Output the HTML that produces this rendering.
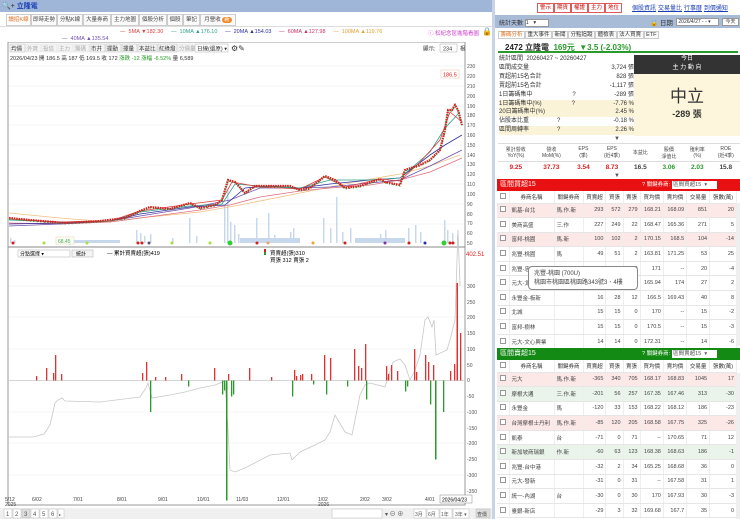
<!DOCTYPE html>
<html><head><meta charset="utf-8">
<style>
*{margin:0;padding:0;box-sizing:border-box}
body{width:740px;height:519px;overflow:hidden;background:#fff;font-family:"Liberation Sans","Noto Sans CJK TC",sans-serif;font-size:7px;color:#333;position:relative}
.a{position:absolute;white-space:nowrap}
.tab{position:absolute;top:14px;height:12px;border:1px solid #ccc;background:#fafafa;font-size:5.5px;line-height:10px;text-align:center;overflow:hidden;color:#444}
.btnr{position:absolute;top:3px;height:10px;border:1px solid #e05a5a;color:#c00;font-size:5.5px;line-height:8px;padding:0 2px;background:#fff}
.lnk{color:#1a3fb5;text-decoration:underline;font-size:6px}
table{border-collapse:collapse}
.bt td{height:14.6px;border-bottom:1px solid #e6e6e6;border-right:1px solid #eee;font-size:5.5px;text-align:right;padding:0 2px;color:#444}
.bt td:nth-child(1){text-align:center;width:12px}
.bt td:nth-child(2){text-align:left;width:45px}
.bt td:nth-child(3){text-align:left;width:29px}
.bt tr.h td{height:12px;text-align:center;background:#fff;color:#333}
.cb{display:inline-block;width:6px;height:6px;border:1px solid #999;background:#fff}
.pink td{background:#fde8e8}
.grn td{background:#eaf4ea}
.r{color:#e02020}.g{color:#2a9a2a}
.rt span.t{border:1px solid #ccc;padding:0 1.5px;background:#fafafa}
</style></head><body>

<div class="a" style="left:0;top:0;width:492px;height:12px;background:#9fb6d8"></div>
<div class="a" style="left:2px;top:1px;font-size:7px;color:#222">🔍+ <span style="color:#1a3fb5;font-weight:bold">立隆電</span></div>
<div class="tab" style="left:6px;width:25px;color:#e07020;background:#fff">讀招K線</div>
<div class="tab" style="left:31px;width:26px">即時走勢</div>
<div class="tab" style="left:57px;width:26px">分點K線</div>
<div class="tab" style="left:83px;width:28px">大量券商</div>
<div class="tab" style="left:111px;width:28px">主力地圖</div>
<div class="tab" style="left:139px;width:28px">個股分析</div>
<div class="tab" style="left:167px;width:16px">個股</div>
<div class="tab" style="left:183px;width:17px">筆記</div>
<div class="tab" style="left:200px;width:36px">月營收 <span style="background:#f08a30;color:#fff;border-radius:4px;padding:0 2px">新</span></div>
<div class="a" style="left:0;top:26px;width:492px;height:1px;background:#ddd"></div>

<div class="a" style="top:29px;left:120px;font-size:5.5px">
<span style="color:#e04040">— &nbsp;5MA ▼182.30</span>&nbsp;&nbsp;&nbsp;&nbsp;
<span style="color:#2aa08a">— &nbsp;10MA ▲176.10</span>&nbsp;&nbsp;&nbsp;&nbsp;
<span style="color:#3030a0">— &nbsp;20MA ▲154.03</span>&nbsp;&nbsp;&nbsp;&nbsp;
<span style="color:#d03060">— &nbsp;60MA ▲127.98</span>&nbsp;&nbsp;&nbsp;&nbsp;
<span style="color:#e0a030">— &nbsp;100MA ▲119.76</span></div>
<div class="a" style="top:29px;left:428px;font-size:5.5px;color:#d040d0">ⓘ 松紀念區進階看圖</div>
<div class="a" style="top:27px;left:482px;font-size:8px">🔒</div>
<div class="a" style="top:36px;left:62px;font-size:5.5px;color:#7050b0">— &nbsp;40MA ▲135.54</div>

<svg class="a" style="left:0;top:42px" width="492" height="477" viewBox="0 42 492 477">
<rect x="8" y="42" width="457" height="463" fill="#fff" stroke="#999"/>
<g font-size="5.5" fill="#333">
<rect x="10" y="44" width="15" height="8" fill="#f4f4f4" stroke="#bbb" stroke-width=".5"/><text x="11" y="50.5">均價</text>
<rect x="26" y="44" width="15" height="8" fill="#f4f4f4" stroke="#ddd" stroke-width=".5"/><text x="27" y="50.5" fill="#aaa">外資</text>
<rect x="42" y="44" width="15" height="8" fill="#f4f4f4" stroke="#ddd" stroke-width=".5"/><text x="43" y="50.5" fill="#aaa">投信</text>
<rect x="58" y="44" width="15" height="8" fill="#f4f4f4" stroke="#ddd" stroke-width=".5"/><text x="59" y="50.5" fill="#aaa">主力</text>
<rect x="74" y="44" width="15" height="8" fill="#f4f4f4" stroke="#ddd" stroke-width=".5"/><text x="75" y="50.5" fill="#aaa">籌碼</text>
<rect x="90" y="44" width="15" height="8" fill="#f4f4f4" stroke="#bbb" stroke-width=".5"/><text x="91" y="50.5">市井</text>
<rect x="106" y="44" width="15" height="8" fill="#f4f4f4" stroke="#bbb" stroke-width=".5"/><text x="107" y="50.5">擺動</text>
<rect x="122" y="44" width="15" height="8" fill="#f4f4f4" stroke="#bbb" stroke-width=".5"/><text x="123" y="50.5">擇量</text>
<rect x="138" y="44" width="19" height="8" fill="#f4f4f4" stroke="#bbb" stroke-width=".5"/><text x="139" y="50.5">本益比</text>
<rect x="158" y="44" width="19" height="8" fill="#f4f4f4" stroke="#bbb" stroke-width=".5"/><text x="159" y="50.5">紅綠燈</text>
<rect x="178" y="44" width="15" height="8" fill="#f4f4f4" stroke="#ddd" stroke-width=".5"/><text x="179" y="50.5" fill="#aaa">分價量</text>
<rect x="195" y="44" width="33" height="8" fill="#fff" stroke="#aaa" stroke-width=".5"/><text x="197" y="50.5">日線(還原)  ▾</text>
<text x="231" y="51" font-size="8">⚙✎</text>
<text x="423" y="50.5">顯示:</text><rect x="440" y="44" width="17" height="8" fill="#fff" stroke="#aaa" stroke-width=".5"/><text x="443" y="50.5">234</text><text x="460" y="50.5">根</text>
<text x="10" y="60">2026/04/23 開 186.5 高 187 低 169.5 收 172 <tspan fill="#2a9a2a">漲跌 -12 漲幅 -6.52%</tspan> 量 6,589</text>
</g>
<g stroke="#f0f0f0" stroke-width=".7">
<line x1="9" y1="66" x2="464" y2="66"/><line x1="9" y1="86" x2="464" y2="86"/><line x1="9" y1="106" x2="464" y2="106"/><line x1="9" y1="125" x2="464" y2="125"/><line x1="9" y1="145" x2="464" y2="145"/><line x1="9" y1="165" x2="464" y2="165"/><line x1="9" y1="184" x2="464" y2="184"/><line x1="9" y1="204" x2="464" y2="204"/><line x1="9" y1="224" x2="464" y2="224"/>
<line x1="9" y1="286" x2="464" y2="286"/><line x1="9" y1="317" x2="464" y2="317"/><line x1="9" y1="349" x2="464" y2="349"/><line x1="9" y1="412" x2="464" y2="412"/><line x1="9" y1="443" x2="464" y2="443"/><line x1="9" y1="475" x2="464" y2="475"/>
</g>
<g font-size="5" fill="#555">
<text x="467" y="68">230</text><text x="467" y="78">220</text><text x="467" y="88">210</text><text x="467" y="98">200</text><text x="467" y="108">190</text><text x="467" y="117">180</text><text x="467" y="127">170</text><text x="467" y="137">160</text><text x="467" y="147">150</text><text x="467" y="157">140</text><text x="467" y="166">130</text><text x="467" y="176">120</text><text x="467" y="186">110</text><text x="467" y="196">100</text><text x="467" y="206">90</text><text x="467" y="216">80</text><text x="467" y="225">70</text><text x="467" y="235">60</text><text x="467" y="245">50</text>
<text x="466" y="256" fill="#e02020" font-size="6">402.51</text>
<text x="467" y="288">300</text><text x="467" y="304">250</text><text x="467" y="319">200</text><text x="467" y="335">150</text><text x="467" y="351">100</text><text x="467" y="367">50</text><text x="467" y="382">0</text><text x="467" y="398">-50</text><text x="467" y="414">-100</text><text x="467" y="430">-150</text><text x="467" y="445">-200</text><text x="467" y="461">-250</text><text x="467" y="477">-300</text><text x="467" y="493">-350</text>
</g>
<rect x="441" y="70" width="18" height="8" fill="#fff" stroke="#f0c0a0" stroke-width=".5"/><text x="443" y="76.5" font-size="5.5" fill="#e02020">186.5</text>
<g fill="#c8d8ec">
<rect x="10" y="238" width="1.5" height="5"/><rect x="14" y="240" width="1.5" height="3"/><rect x="136" y="230" width="1.5" height="13"/><rect x="140" y="233" width="1.5" height="10"/><rect x="144" y="236" width="1.5" height="7"/><rect x="150" y="234" width="1.5" height="9"/><rect x="172" y="238" width="1.5" height="5"/><rect x="189" y="218" width="1.5" height="25"/><rect x="196" y="236" width="1.5" height="7"/><rect x="224" y="206" width="1.5" height="37"/><rect x="227" y="190" width="1.5" height="53"/><rect x="230" y="222" width="1.5" height="21"/><rect x="234" y="225" width="1.5" height="18"/><rect x="238" y="234" width="1.5" height="9"/><rect x="256" y="218" width="1.5" height="25"/><rect x="268" y="213" width="1.5" height="30"/><rect x="274" y="235" width="1.5" height="8"/><rect x="290" y="232" width="1.5" height="11"/><rect x="293" y="228" width="1.5" height="15"/><rect x="323" y="218" width="1.5" height="25"/><rect x="330" y="228" width="1.5" height="15"/><rect x="336" y="197" width="1.5" height="46"/><rect x="342" y="232" width="1.5" height="11"/><rect x="350" y="228" width="1.5" height="15"/><rect x="380" y="234" width="1.5" height="9"/><rect x="385" y="230" width="1.5" height="13"/><rect x="408" y="228" width="1.5" height="15"/><rect x="415" y="225" width="1.5" height="18"/><rect x="420" y="232" width="1.5" height="11"/><rect x="444" y="220" width="1.5" height="23"/><rect x="447" y="230" width="1.5" height="13"/><rect x="452" y="233" width="1.5" height="10"/><rect x="457" y="235" width="1.5" height="8"/>
<rect x="60" y="240" width="60" height="3"/><rect x="240" y="238" width="60" height="5"/><rect x="355" y="238" width="50" height="5"/>
</g>
<g>
<circle cx="13" cy="243" r="1.5" fill="#d02020"/><circle cx="44" cy="243" r="1.5" fill="#a0e040"/><circle cx="70" cy="243" r="1.5" fill="#30d0d0"/><circle cx="87" cy="243" r="1.5" fill="#a0e040"/><circle cx="138" cy="243" r="1.5" fill="#d02020"/><circle cx="142" cy="243" r="1.5" fill="#d02020"/><circle cx="149" cy="243" r="1.5" fill="#605080"/><circle cx="172" cy="243" r="1.5" fill="#a0e040"/><circle cx="210" cy="243" r="1.5" fill="#a0e040"/><circle cx="230" cy="243" r="2.5" fill="#30d030"/><circle cx="257" cy="243" r="1.5" fill="#d02020"/><circle cx="268" cy="243" r="1.5" fill="#f0a060"/><circle cx="313" cy="243" r="1.5" fill="#f0a030"/><circle cx="345" cy="243" r="1.5" fill="#d02020"/><circle cx="385" cy="243" r="1.5" fill="#8030a0"/><circle cx="409" cy="243" r="1.5" fill="#d02020"/><circle cx="425" cy="243" r="1.5" fill="#2030b0"/><circle cx="444" cy="243" r="2.5" fill="#30d030"/><circle cx="450" cy="243" r="1.5" fill="#d02020"/><circle cx="453" cy="243" r="1.5" fill="#d02020"/>
</g>
<rect x="56" y="237" width="18" height="7" fill="#fff" stroke="#e0d0a0" stroke-width=".5"/><text x="58" y="243" font-size="5" fill="#4a4">68.45</text>
<polyline fill="none" stroke="#f0c080" stroke-width=".8" points="9,213 60,218 110,222 140,218 200,212 240,205 300,193 330,187 360,181 400,174 430,166 460,155"/>
<polyline fill="none" stroke="#e07080" stroke-width=".8" points="9,223 60,224 110,222 140,218 200,210 230,205 260,197 300,191 330,188 370,185 400,180 430,172 462,158"/>
<polyline fill="none" stroke="#7050b0" stroke-width=".8" points="9,226 60,224 110,221 140,216 190,208 230,200 260,188 300,188 330,187 370,183 400,180 430,166 462,150"/>
<polyline fill="none" stroke="#3030a0" stroke-width=".8" points="9,224 60,223 110,221 140,214 190,207 225,205 245,188 270,186 300,188 330,184 370,180 400,178 430,155 445,145 462,135"/>
<polyline fill="none" stroke="#2aa08a" stroke-width=".8" points="9,220 60,222 110,221 140,212 190,206 222,204 235,184 260,186 300,188 330,180 370,180 400,178 430,152 445,128 460,112"/>
<polyline fill="none" stroke="#e04040" stroke-width=".8" points="9,219 60,222 110,221 140,211 190,204 222,200 232,182 260,187 300,189 325,177 345,187 380,179 400,181 420,162 440,140 450,112 462,122"/>
<polyline fill="none" stroke="#d82020" stroke-width="2.2" stroke-dasharray="1.6 .8" points="9,218 30,220 65,223 100,221 125,218 140,211 150,207 170,209 190,203 200,208 215,205 222,200 228,180 235,182 245,193 255,186 270,186 290,186 300,190 310,188 325,176 335,180 345,188 360,186 380,179 385,182 400,185 405,170 420,165 430,160 440,150 445,130 448,110 452,110 455,105 458,110 462,125"/>
<polyline fill="none" stroke="#2a8a2a" stroke-width="1.2" stroke-dasharray="1 2.5" points="9,219 30,221 65,224 100,222 125,219 140,212 150,208 170,210 190,204 200,209 215,206 222,201 228,181 235,183 245,194 255,187 270,187 290,187 300,191 310,189 325,177 335,181 345,189 360,187 380,180 385,183 400,186 405,171 420,166 430,161 440,151 445,131 448,111 452,111 455,106 458,111 462,126"/>
<line x1="8" y1="247" x2="465" y2="247" stroke="#888"/>
<rect x="18" y="250" width="52" height="7" fill="#fff" stroke="#aaa" stroke-width=".5"/><text x="20" y="255.5" font-size="5">分點選擇      ▾</text>
<rect x="72" y="250" width="21" height="7" fill="#f4f4f4" stroke="#aaa" stroke-width=".5"/><text x="76" y="255.5" font-size="5">統計</text>
<text x="107" y="255" font-size="5.5">— 累計買賣超(張)419</text>
<rect x="264" y="249" width="2" height="3" fill="#d02020"/><rect x="264" y="252" width="2" height="3" fill="#2a9a2a"/>
<text x="270" y="255" font-size="5.5">買賣超(張)310</text><text x="270" y="262" font-size="5.5">買張 312 賣張 2</text>
<line x1="9" y1="380.5" x2="464" y2="380.5" stroke="#aaa" stroke-width=".6"/>
<polyline fill="none" stroke="#c8c8c8" stroke-width=".8" points="9,437 33,437 44,434 50,425 55,403 58,400 62,398 65,401 100,402 140,397 146,388 148,383 152,398 170,395 185,392 200,388 215,385 225,381 228,430 230,470 235,472 245,468 270,455 290,453 292,460 300,452 315,445 325,440 330,432 335,415 345,432 352,435 355,420 360,395 365,385 370,383 385,387 393,362 400,359 405,365 410,380 415,370 420,355 425,320 428,317 432,327 434,320 436,355 447,350 450,340 455,320 458,230 460,286"/>
<g fill="#e03030">
<rect x="36" y="376" width="1.3" height="4.5"/><rect x="46" y="368" width="1.3" height="12.5"/><rect x="53" y="373" width="1.3" height="7.5"/><rect x="55" y="355" width="1.3" height="25.5"/><rect x="61" y="374" width="1.3" height="6.5"/><rect x="142" y="373" width="1.3" height="7.5"/><rect x="146" y="362" width="1.3" height="18.5"/><rect x="155" y="377" width="1.3" height="3.5"/><rect x="165" y="377" width="1.3" height="3.5"/><rect x="181" y="374" width="1.3" height="6.5"/><rect x="214" y="368" width="1.3" height="12.5"/><rect x="228" y="374" width="1.3" height="6.5"/><rect x="249" y="368" width="1.3" height="12.5"/><rect x="271" y="377" width="1.3" height="3.5"/><rect x="294" y="370" width="1.3" height="10.5"/><rect x="296" y="376" width="1.3" height="4.5"/><rect x="300" y="375" width="1.3" height="5.5"/><rect x="302" y="374" width="1.3" height="6.5"/><rect x="311" y="374" width="1.3" height="6.5"/><rect x="324" y="355" width="1.3" height="25.5"/><rect x="330" y="358" width="1.3" height="22.5"/><rect x="354" y="349" width="1.3" height="31.5"/><rect x="358" y="366" width="1.3" height="14.5"/><rect x="361" y="368" width="1.3" height="12.5"/><rect x="365" y="344" width="1.3" height="36.5"/><rect x="386" y="366" width="1.3" height="14.5"/><rect x="388" y="374" width="1.3" height="6.5"/><rect x="391" y="365" width="1.3" height="15.5"/><rect x="397" y="371" width="1.3" height="9.5"/><rect x="414" y="349" width="1.3" height="31.5"/><rect x="416" y="372" width="1.3" height="8.5"/><rect x="425" y="355" width="1.3" height="25.5"/><rect x="428" y="362" width="1.3" height="18.5"/><rect x="433" y="365" width="1.3" height="15.5"/><rect x="450" y="371" width="1.3" height="9.5"/><rect x="454" y="364" width="1.3" height="16.5"/><rect x="456.5" y="283" width="1.5" height="97.5"/><rect x="460" y="333" width="1.3" height="47.5"/>
</g>
<g fill="#2a9a2a">
<rect x="150" y="380.5" width="1.3" height="31.5"/><rect x="188" y="380.5" width="1.3" height="6"/><rect x="222" y="380.5" width="1.3" height="14"/><rect x="224" y="380.5" width="1.3" height="10"/><rect x="226" y="380.5" width="1.5" height="120"/><rect x="231" y="380.5" width="1.3" height="16"/><rect x="233" y="380.5" width="1.3" height="14"/><rect x="292" y="380.5" width="1.3" height="16"/><rect x="313" y="380.5" width="1.3" height="4"/><rect x="326" y="380.5" width="1.3" height="14"/><rect x="347" y="380.5" width="1.3" height="6"/><rect x="366" y="380.5" width="1.3" height="19"/><rect x="405" y="380.5" width="1.3" height="11"/><rect x="407" y="380.5" width="1.3" height="6"/><rect x="430" y="380.5" width="1.3" height="24"/><rect x="435" y="380.5" width="1.5" height="79"/><rect x="443" y="380.5" width="1.3" height="31.5"/>
</g>
<g font-size="5" fill="#444">
<text x="5" y="501">5/12</text><text x="5" y="506">2025</text><text x="32" y="501">6/02</text><text x="73" y="501">7/01</text><text x="117" y="501">8/01</text><text x="158" y="501">9/01</text><text x="197" y="501">10/01</text><text x="236" y="501">11/03</text><text x="277" y="501">12/01</text><text x="318" y="501">1/02</text><text x="318" y="506">2026</text><text x="360" y="501">2/02</text><text x="382" y="501">3/02</text><text x="425" y="501">4/01</text>
</g>
<rect x="440" y="495" width="32" height="8" fill="#fff" stroke="#888" stroke-width=".5"/><text x="442" y="501.5" font-size="5">2026/04/23</text>
<rect x="0" y="508" width="492" height="11" fill="#f0f0f0"/>
<g font-size="6" fill="#555">
<rect x="4" y="509" width="8" height="9" fill="#fff" stroke="#bbb" stroke-width=".5"/><text x="6" y="516">1</text>
<rect x="13" y="509" width="8" height="9" fill="#fff" stroke="#bbb" stroke-width=".5"/><text x="15" y="516">2</text>
<rect x="22" y="509" width="8" height="9" fill="#ddd" stroke="#bbb" stroke-width=".5"/><text x="24" y="516">3</text>
<rect x="31" y="509" width="8" height="9" fill="#fff" stroke="#bbb" stroke-width=".5"/><text x="33" y="516">4</text>
<rect x="40" y="509" width="8" height="9" fill="#fff" stroke="#bbb" stroke-width=".5"/><text x="42" y="516">5</text>
<rect x="49" y="509" width="8" height="9" fill="#fff" stroke="#bbb" stroke-width=".5"/><text x="51" y="516">6</text>
<rect x="58" y="509" width="6" height="9" fill="#fff" stroke="#bbb" stroke-width=".5"/><text x="59" y="516" font-size="4">▸</text>
<rect x="332" y="509" width="50" height="9" fill="#fff" stroke="#bbb" stroke-width=".5"/>
<text x="385" y="516">▾ ⊖ ⊕</text>
<rect x="414" y="509" width="12" height="9" fill="#fff" stroke="#bbb" stroke-width=".5"/><text x="415" y="516" font-size="5">3月</text>
<rect x="427" y="509" width="12" height="9" fill="#fff" stroke="#bbb" stroke-width=".5"/><text x="428" y="516" font-size="5">6月</text>
<rect x="440" y="509" width="12" height="9" fill="#fff" stroke="#bbb" stroke-width=".5"/><text x="441" y="516" font-size="5">1年</text>
<rect x="453" y="509" width="16" height="9" fill="#fff" stroke="#bbb" stroke-width=".5"/><text x="455" y="516" font-size="5">3年 ▾</text>
<rect x="476" y="509" width="14" height="9" fill="#ddd" stroke="#bbb" stroke-width=".5"/><text x="477" y="516" font-size="5">查價</text>
</g>
</svg>

<div class="a" style="left:492px;top:0;width:3px;height:519px;background:#c8d4e4"></div>

<div class="btnr" style="left:537px">警示</div>
<div class="btnr" style="left:554px">期貨</div>
<div class="btnr" style="left:571px">權證</div>
<div class="btnr" style="left:588px">主力</div>
<div class="btnr" style="left:605px">地位</div>
<div class="a" style="left:632px;top:3px"><span class="lnk">個股資訊</span> <span class="lnk">交易量比</span> <span class="lnk">行事曆</span> <span class="lnk">到價通知</span></div>
<div class="a" style="left:495px;top:15px;width:245px;height:13px;background:#a8bcd8"></div>
<div class="a" style="left:499px;top:18px;font-size:6px">統計天數 <span style="display:inline-block;width:24px;height:8px;background:#fff;border:1px solid #999;vertical-align:middle;font-size:5.5px;line-height:6px">1 &nbsp; ▾</span></div>
<div class="a" style="left:650px;top:17px;font-size:6.5px">🔒 日期</div>
<div class="a" style="left:676px;top:18px;width:43px;height:8px;background:#fff;border:1px solid #999;font-size:5px;line-height:6px;overflow:hidden">&nbsp;2026/4/27 - - ▾</div>
<div class="a" style="left:722px;top:18px;width:17px;height:8px;background:#fff;border:1px solid #999;font-size:5px;line-height:6px;text-align:center">今天</div>
<div class="a rt" style="left:498px;top:30px;font-size:5.5px">
<span class="t" style="color:#e07020;background:#fff">籌碼分析</span><span class="t">重大事件</span><span class="t">新聞</span><span class="t">分點追蹤</span><span class="t">體檢表</span><span class="t">法人買賣</span><span class="t">ETF</span></div>
<div class="a" style="left:498px;top:40px;width:240px;height:13px;border-bottom:2px solid #2a9a2a"></div>
<div class="a" style="left:505px;top:42px;font-size:8px;font-weight:bold;color:#222">2472 立隆電 &nbsp;<span class="g">169元 &nbsp;▼3.5 (-2.03%)</span></div>

<div class="a" style="left:499px;top:55px;width:135px;font-size:6px;line-height:8.9px">
<div>統計區間 &nbsp;20260427 ~ 20260427</div>
<div>區間成交量<span style="float:right">3,724 張</span></div>
<div>買超前15名合計<span style="float:right">828 張</span></div>
<div>賣超前15名合計<span style="float:right">-1,117 張</span></div>
<div>1日籌碼集中<span style="margin-left:40px">?</span><span style="float:right">-289 張</span></div>
<div style="background:#fbf3d8">1日籌碼集中(%)<span style="margin-left:30px">?</span><span style="float:right">-7.76 %</span></div>
<div style="background:#fbf3d8">20日籌碼集中(%)<span style="float:right">2.45 %</span></div>
<div>佔股本比重<span style="margin-left:28px">?</span><span style="float:right">-0.18 %</span></div>
<div style="background:#fbf3d8">區間周轉率<span style="margin-left:28px">?</span><span style="float:right">2.26 %</span></div>
</div>
<div class="a" style="left:634px;top:55px;width:106px;height:19px;background:#333;color:#fff;font-size:6px;text-align:center;line-height:9px">今日<br>主 力 動 向</div>
<div class="a" style="left:634px;top:74px;width:106px;height:62px;background:#fdf5dc;text-align:center">
<div style="font-size:17px;margin-top:8px;color:#333">中立</div>
<div style="font-size:9px;font-weight:bold;color:#333">-289 張</div></div>
<div class="a" style="left:614px;top:136px;font-size:6px;color:#555">▼</div>

<div class="a" style="left:498px;top:143px;width:242px;font-size:5px;text-align:center;color:#444">
<div style="display:flex;border-top:1px solid #ddd;border-bottom:1px solid #ddd;height:19px;align-items:center">
<div style="flex:1">累計營收<br>YoY(%)</div><div style="flex:1">營收<br>MoM(%)</div><div style="flex:.8">EPS<br>(季)</div><div style="flex:.8">EPS<br>(近4季)</div><div style="flex:.8">本益比</div><div style="flex:.8">股價<br>淨值比</div><div style="flex:.8">殖利率<br>(%)</div><div style="flex:.8">ROE<br>(近4季)</div></div>
<div style="display:flex;height:11px;align-items:center;font-size:6.5px;font-weight:bold">
<div style="flex:1" class="r">9.25</div><div style="flex:1" class="r">37.73</div><div style="flex:.8" class="r">3.54</div><div style="flex:.8" class="r">8.73</div><div style="flex:.8">16.5</div><div style="flex:.8" class="g">3.06</div><div style="flex:.8" class="g">2.03</div><div style="flex:.8">15.8</div></div>
</div>
<div class="a" style="left:614px;top:173px;font-size:6px;color:#555">▼</div>

<div class="a" style="left:497px;top:179px;width:243px;height:12px;background:#e81010;color:#fff;font-size:7px;line-height:12px;padding-left:3px">區間買超15
<span style="position:absolute;left:145px;font-size:5.5px">? 關鍵券商: <span style="display:inline-block;width:45px;height:8px;background:#fff;color:#555;line-height:8px;vertical-align:middle">&nbsp;區間買超15 &nbsp;▾</span></span></div>
<table class="a bt" style="left:497px;top:191px;width:240px">
<tr class="h"><td><span class="cb"></span></td><td style="text-align:center">券商名稱</td><td style="text-align:center">關鍵券商</td><td>買賣超</td><td>買張</td><td>賣張</td><td>買均價</td><td>賣均價</td><td>交易量</td><td>張數(萬)</td></tr>
<tr class="pink"><td><span class="cb"></span></td><td>凱基-台北</td><td class="r">馬.作.新</td><td>293</td><td>572</td><td>279</td><td>168.21</td><td>168.09</td><td>851</td><td>20</td></tr>
<tr><td><span class="cb"></span></td><td>美商高盛</td><td class="g">三.作</td><td>227</td><td>249</td><td>22</td><td>168.47</td><td>165.36</td><td>271</td><td>5</td></tr>
<tr class="pink"><td><span class="cb"></span></td><td>富邦-桃園</td><td class="r">馬.新</td><td>100</td><td>102</td><td>2</td><td>170.15</td><td>168.5</td><td>104</td><td>-14</td></tr>
<tr><td><span class="cb"></span></td><td>兆豐-桃園</td><td class="r">馬</td><td>49</td><td>51</td><td>2</td><td>163.81</td><td>171.25</td><td>53</td><td>25</td></tr>
<tr><td><span class="cb"></span></td><td>兆豐-忠孝</td><td></td><td>20</td><td>20</td><td>0</td><td>171</td><td>--</td><td>20</td><td>-4</td></tr>
<tr><td><span class="cb"></span></td><td>元大-北</td><td></td><td>19</td><td>23</td><td>4</td><td>165.94</td><td>174</td><td>27</td><td>2</td></tr>
<tr><td><span class="cb"></span></td><td>永豐金-板新</td><td></td><td>16</td><td>28</td><td>12</td><td>166.5</td><td>169.43</td><td>40</td><td>8</td></tr>
<tr><td><span class="cb"></span></td><td>北城</td><td></td><td>15</td><td>15</td><td>0</td><td>170</td><td>--</td><td>15</td><td>-2</td></tr>
<tr><td><span class="cb"></span></td><td>富邦-樹林</td><td></td><td>15</td><td>15</td><td>0</td><td>170.5</td><td>--</td><td>15</td><td>-3</td></tr>
<tr><td><span class="cb"></span></td><td>元大-文心興業</td><td></td><td>14</td><td>14</td><td>0</td><td>172.31</td><td>--</td><td>14</td><td>-6</td></tr>
</table>
<div class="a" style="left:528px;top:266px;width:110px;height:24px;background:#fff;border:1px solid #888;border-radius:4px;font-size:6px;line-height:9px;padding:3px 5px;color:#444">兆豐-桃園 (700U)<br>桃園市桃園區桃園路343號3、4樓</div>

<div class="a" style="left:497px;top:348px;width:243px;height:12px;background:#138a13;color:#fff;font-size:7px;line-height:12px;padding-left:3px">區間賣超15
<span style="position:absolute;left:145px;font-size:5.5px">? 關鍵券商: <span style="display:inline-block;width:45px;height:8px;background:#fff;color:#555;line-height:8px;vertical-align:middle">&nbsp;區間賣超15 &nbsp;▾</span></span></div>
<table class="a bt" style="left:497px;top:360px;width:240px">
<tr class="h"><td><span class="cb"></span></td><td style="text-align:center">券商名稱</td><td style="text-align:center">關鍵券商</td><td>買賣超</td><td>買張</td><td>賣張</td><td>買均價</td><td>賣均價</td><td>交易量</td><td>張數(萬)</td></tr>
<tr class="pink"><td><span class="cb"></span></td><td>元大</td><td class="r">馬.作.新</td><td>-365</td><td>340</td><td>705</td><td>168.17</td><td>168.83</td><td>1045</td><td>17</td></tr>
<tr class="grn"><td><span class="cb"></span></td><td>摩根大通</td><td class="g">三.作.新</td><td>-201</td><td>56</td><td>257</td><td>167.35</td><td>167.46</td><td>313</td><td>-30</td></tr>
<tr><td><span class="cb"></span></td><td>永豐金</td><td class="r">馬</td><td>-120</td><td>33</td><td>153</td><td>168.22</td><td>168.12</td><td>186</td><td>-23</td></tr>
<tr class="pink"><td><span class="cb"></span></td><td>台灣摩根士丹利</td><td class="r">馬.作.新</td><td>-85</td><td>120</td><td>205</td><td>168.58</td><td>167.75</td><td>325</td><td>-26</td></tr>
<tr><td><span class="cb"></span></td><td>凱泰</td><td class="g">台</td><td>-71</td><td>0</td><td>71</td><td>--</td><td>170.65</td><td>71</td><td>12</td></tr>
<tr class="grn"><td><span class="cb"></span></td><td>新加坡商瑞銀</td><td class="g">作.新</td><td>-60</td><td>63</td><td>123</td><td>168.38</td><td>168.63</td><td>186</td><td>-1</td></tr>
<tr><td><span class="cb"></span></td><td>兆豐-台中港</td><td></td><td>-32</td><td>2</td><td>34</td><td>165.25</td><td>168.68</td><td>36</td><td>0</td></tr>
<tr><td><span class="cb"></span></td><td>元大-發新</td><td></td><td>-31</td><td>0</td><td>31</td><td>--</td><td>167.58</td><td>31</td><td>1</td></tr>
<tr><td><span class="cb"></span></td><td>統一-內湖</td><td class="g">台</td><td>-30</td><td>0</td><td>30</td><td>170</td><td>167.93</td><td>30</td><td>-3</td></tr>
<tr><td><span class="cb"></span></td><td>臺銀-新店</td><td></td><td>-29</td><td>3</td><td>32</td><td>169.68</td><td>167.7</td><td>35</td><td>0</td></tr>
</table>
<div class="a" style="left:736px;top:203px;width:4px;height:143px;background:#eee"></div>
<div class="a" style="left:736px;top:373px;width:4px;height:146px;background:#eee"></div>
</body></html>
